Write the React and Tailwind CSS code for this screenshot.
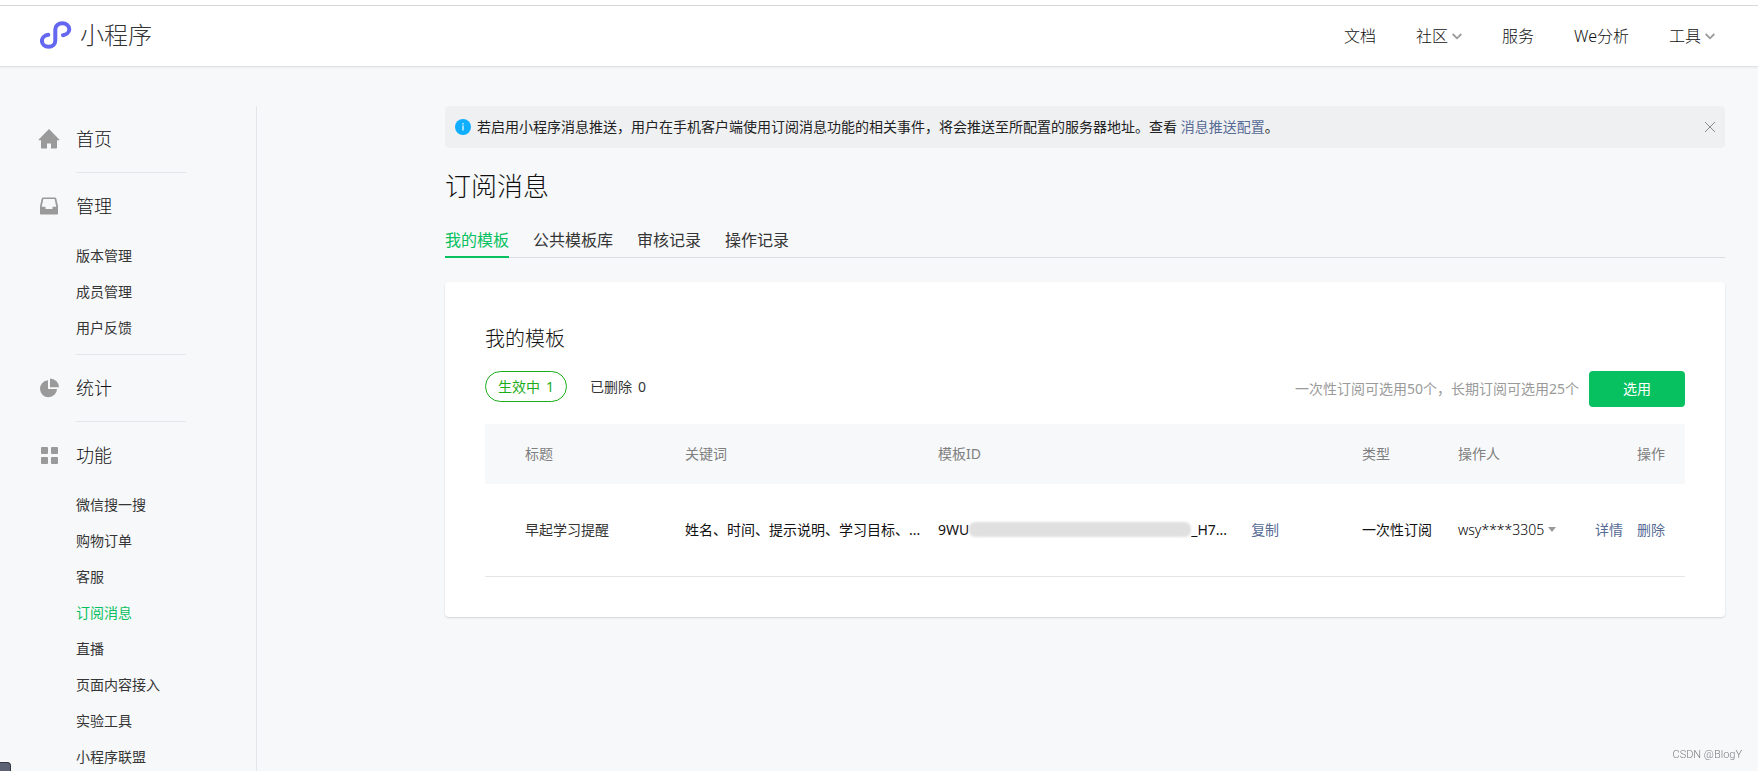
import React from "react";

const NAV = [
  { label: "文档" },
  { label: "社区", menu: true },
  { label: "服务" },
  { label: "We分析" },
  { label: "工具", menu: true },
];

const SECTIONS = [
  { label: "首页", icon: HomeIcon, items: [] },
  { label: "管理", icon: TrayIcon, items: ["版本管理", "成员管理", "用户反馈"] },
  { label: "统计", icon: PieIcon, items: [] },
  {
    label: "功能",
    icon: GridIcon,
    items: ["微信搜一搜", "购物订单", "客服", "订阅消息", "直播", "页面内容接入", "实验工具", "小程序联盟"],
  },
];

const TABS = ["我的模板", "公共模板库", "审核记录", "操作记录"];

function LogoMark() {
  return (
    <svg width="32" height="28" viewBox="0 0 32 28" fill="none" aria-hidden="true">
      <path
        d="M23 14.2c2.6-.4 6.3-2.2 6.3-6 0-3.400-3-6-7-6s-7 2.800-7 6.300v11c0 3.500-2.800 6.300-6.700 6.300s-6.700-2.600-6.700-6c0-3.400 3.300-5.600 6.400-6"
        stroke="#6467ef"
        strokeWidth="4"
        strokeLinecap="round"
      />
    </svg>
  );
}

function HomeIcon() {
  return (
    <svg width="22" height="20" viewBox="0 0 22 20" fill="#9a9a9a" aria-hidden="true">
      <path d="M11 0 21.300 10.500c.3.300.1.700-.3.700H19V18.500c0 .6-.4 1-1 1h-5v-5H9v5H4c-.6 0-1-.4-1-1v-7.300H1c-.4 0-.6-.4-.3-.7z" />
    </svg>
  );
}

function TrayIcon() {
  return (
    <svg width="22" height="20" viewBox="0 0 22 20" fill="#9a9a9a" aria-hidden="true">
      <path
        fillRule="evenodd"
        d="M5 1.500h12c.6 0 1 .3 1.200.8L20 10v7.500c0 .6-.4 1-1 1H3c-.6 0-1-.4-1-1V10l1.800-7.700c.2-.5.6-.8 1.200-.8zM5.400 3 3.700 10.700H7.500v2.300h7v-2.300h3.800L16.600 3z"
      />
    </svg>
  );
}

function PieIcon() {
  return (
    <svg width="22" height="20" viewBox="0 0 22 20" fill="#9a9a9a" aria-hidden="true">
      <path d="M10 2.300V11h9a8.500 8.500 0 1 1-9-8.700z" />
      <path d="M12 .500A9 9 0 0 1 21 9.300H12z" />
    </svg>
  );
}

function GridIcon() {
  return (
    <svg width="22" height="20" viewBox="0 0 22 20" fill="#9a9a9a" aria-hidden="true">
      <rect x="3" y="2" width="7" height="7" rx="1" />
      <rect x="13" y="2" width="7" height="7" rx="1" />
      <rect x="3" y="12" width="7" height="7" rx="1" />
      <rect x="13" y="12" width="7" height="7" rx="1" />
    </svg>
  );
}

function Header() {
  return (
    <header className="flex h-[61px] items-center justify-between border-b border-[#dfe1e4] bg-white pr-[43px] pl-10 shadow-xs">
      <a href="#home" className="flex items-center gap-2 pb-0.5 text-2xl leading-8 text-[#333]">
        <LogoMark />
        <span>小程序</span>
      </a>
      <nav className="flex items-center gap-10 text-base leading-6 text-[#111]">
        {NAV.map((n) => (
          <a key={n.label} href="#nav" className="flex items-center gap-1">
            {n.label}
            {n.menu && (
              <svg width="10" height="7" viewBox="0 0 10 7" fill="none" aria-hidden="true">
                <path d="M.7 1 5 5.300 9.300 1" stroke="#9a9a9a" strokeWidth="1.800" />
              </svg>
            )}
          </a>
        ))}
      </nav>
    </header>
  );
}

function Sidebar() {
  return (
    <aside className="w-[257px] shrink-0 border-r border-[#e4e6e9] pl-[38px] text-[#111]">
      {SECTIONS.map((s, i) => (
        <section key={s.label}>
          <a href="#section" className="flex h-[66px] items-center gap-4 text-lg leading-6">
            <s.icon />
            <span>{s.label}</span>
          </a>
          {s.items.length > 0 && (
            <ul className="flex flex-col gap-4 pt-[7px] pb-4 pl-[38px] text-sm leading-5 font-normal text-[#353535] last:pb-1">
              {s.items.map((t) => (
                <li key={t}>
                  <a href="#item" className={t === "订阅消息" ? "text-[#07c160]" : ""}>
                    {t}
                  </a>
                </li>
              ))}
            </ul>
          )}
          {i < SECTIONS.length - 1 && <hr className="ml-[38px] w-[110px] border-[#e4e6e9]" />}
        </section>
      ))}
    </aside>
  );
}

function Notice() {
  return (
    <div className="flex h-[42px] items-center rounded bg-[#eff0f2] px-2.5 text-sm leading-5 font-normal text-[#222]">
      <svg className="mr-1.5 shrink-0" width="16" height="16" viewBox="0 0 16 16" aria-hidden="true">
        <circle cx="8" cy="8" r="8" fill="#10aeff" />
        <rect x="7.400" y="4" width="1.200" height="1.400" fill="#fff" />
        <rect x="7.400" y="6.500" width="1.200" height="5" fill="#fff" />
      </svg>
      <p className="flex-1">
        若启用小程序消息推送，用户在手机客户端使用订阅消息功能的相关事件，将会推送至所配置的服务器地址。查看{" "}
        <a href="#push" className="text-[#576b95]">
          消息推送配置
        </a>
        。
      </p>
      <button type="button" aria-label="关闭">
        <svg width="10" height="10" viewBox="0 0 10 10" aria-hidden="true">
          <path d="M0 0 10 10M10 0 0 10" stroke="#8a8b8d" />
        </svg>
      </button>
    </div>
  );
}

function TemplateTable() {
  return (
    <table className="mt-[17px] w-full table-fixed border-collapse text-left text-sm leading-5 font-normal whitespace-nowrap">
      <colgroup>
        <col className="w-[200px]" />
        <col className="w-[253px]" />
        <col />
        <col className="w-[96px]" />
        <col className="w-[227px]" />
      </colgroup>
      <thead>
        <tr className="h-[60px] bg-[#f7f8fa] text-[#7f7f7f]">
          <th className="pl-10 font-normal">标题</th>
          <th className="font-normal">关键词</th>
          <th className="font-normal">模板ID</th>
          <th className="font-normal">类型</th>
          <th className="pr-5 font-normal">
            <div className="flex justify-between">
              <span>操作人</span>
              <span>操作</span>
            </div>
          </th>
        </tr>
      </thead>
      <tbody>
        <tr className="h-[92px] border-b border-[#e4e6e9] text-[#111]">
          <td className="pl-10 text-[#353535]">早起学习提醒</td>
          <td>姓名、时间、提示说明、学习目标、...</td>
          <td>
            <div className="flex items-center">
              <span>9WU</span>
              <span className="h-[15px] w-[222px] rounded-md bg-[#e0e0e0] blur-[1px]" />
              <span>_H7...</span>
              <a href="#copy" className="ml-6 text-[#576b95]">
                复制
              </a>
            </div>
          </td>
          <td>一次性订阅</td>
          <td className="pr-5">
            <div className="flex items-center justify-between">
              <button type="button" className="flex items-center gap-1 font-light text-black">
                wsy****3305
                <svg width="8" height="5" viewBox="0 0 8 5" fill="#9a9a9a" aria-hidden="true">
                  <path d="M0 0h8L4 5z" />
                </svg>
              </button>
              <span className="flex gap-3.5 text-[#576b95]">
                <a href="#detail">详情</a>
                <a href="#delete">删除</a>
              </span>
            </div>
          </td>
        </tr>
      </tbody>
    </table>
  );
}

export default function App() {
  return (
    <div className="flex min-h-screen flex-col bg-[#f7f8fa] font-['Noto_Sans','Noto_Sans_CJK_SC',sans-serif] font-light">
      <div className="h-1.5 border-b border-[#d8d8d8] bg-white" />
      <Header />
      <div className="flex flex-1 pt-[39px] pr-[33px]">
        <Sidebar />
        <main className="ml-[188px] min-w-0 flex-1">
          <Notice />
          <h1 className="mt-5 text-[26px] leading-9 text-[#111]">订阅消息</h1>
          <div
            role="tablist"
            className="mt-5 flex h-[34px] gap-6 border-b border-[#dcdee1] text-base leading-6 font-normal"
          >
            {TABS.map((t, i) => (
              <button
                key={t}
                type="button"
                role="tab"
                aria-selected={i === 0}
                className={
                  i === 0
                    ? "-mb-px flex border-b-2 border-[#07c160] pt-1 text-[#07c160]"
                    : "flex pt-1 text-[#353535]"
                }
              >
                {t}
              </button>
            ))}
          </div>
          <section className="mt-6 rounded bg-white px-10 pt-[41px] pb-10 shadow-[0_1px_2px_rgba(0,0,0,0.15)]">
            <h2 className="text-xl leading-8 text-[#111]">我的模板</h2>
            <div className="mt-4 flex items-start text-sm leading-5 font-normal">
              <button type="button" className="h-[31px] rounded-full border border-[#1aad19] px-3 text-[#1aad19]">
                <span className="mr-1.5">生效中</span>1
              </button>
              <button type="button" className="ml-[23px] h-[31px] text-[#353535]">
                <span className="mr-1.5">已删除</span>0
              </button>
              <p className="ml-auto self-center text-[#9a9a9a]">一次性订阅可选用50个，长期订阅可选用25个</p>
              <button type="button" className="ml-2.5 h-9 w-24 rounded bg-[#07c160] text-white">
                选用
              </button>
            </div>
            <TemplateTable />
          </section>
        </main>
      </div>
      <div className="fixed bottom-0 left-0 h-[9px] w-[11px] rounded-tr border-t border-r border-[#33363f] bg-[#5c6273]" />
      <p className="fixed right-4 bottom-2 font-['Roboto',sans-serif] text-[11px] leading-4 text-[#7c7f80]">CSDN @BlogY</p>
    </div>
  );
}
